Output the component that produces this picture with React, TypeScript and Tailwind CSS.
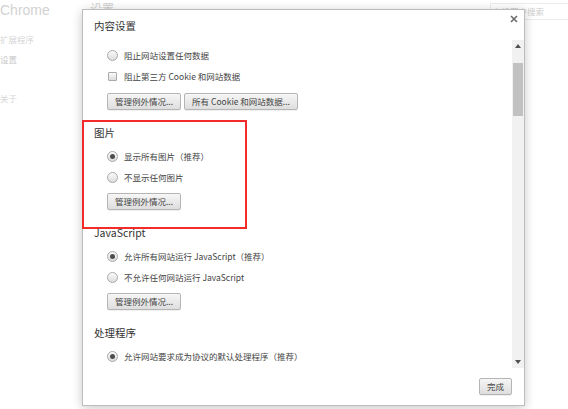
import React from "react";

const CJK = "font-['Noto_Sans_CJK_SC',sans-serif]";

function Radio({ checked }: { checked?: boolean }) {
  return (
    <span className="w-[11px] h-[11px] rounded-full border border-[#a9a9a9] bg-linear-to-b from-[#fbfbfb] to-[#dcdcdc] flex items-center justify-center shrink-0">
      {checked && <span className="w-[5px] h-[5px] rounded-full bg-[#4d4d4d]" />}
    </span>
  );
}

function Check() {
  return (
    <span className="w-[9px] h-[9px] ml-[1px] mr-[1px] rounded-[1px] border border-[#a9a9a9] bg-linear-to-b from-[#fbfbfb] to-[#dcdcdc] shrink-0" />
  );
}

function Option({
  kind = "radio",
  checked,
  children,
}: {
  kind?: "radio" | "check";
  checked?: boolean;
  children: React.ReactNode;
}) {
  return (
    <div className="h-[21px] flex items-center gap-[6px] pl-[24px] text-[8.5px] leading-none text-[#444]">
      {kind === "radio" ? <Radio checked={checked} /> : <Check />}
      <span>{children}</span>
    </div>
  );
}

function Btn({ children }: { children: React.ReactNode }) {
  return (
    <button className="h-[17px] px-[7px] rounded-[2px] border border-[#b5b5b5] bg-linear-to-b from-[#f6f6f6] to-[#dedede] text-[8.5px] leading-none text-[#444] shadow-[0_1px_0_rgba(0,0,0,0.06)]">
      {children}
    </button>
  );
}

function Section({
  title,
  children,
  buttons,
}: {
  title: string;
  children: React.ReactNode;
  buttons?: React.ReactNode;
}) {
  return (
    <div className="mt-[13px]">
      <div className="h-[20px] leading-[20px] pl-[11px] text-[10.5px] text-[#333]">{title}</div>
      <div className="mt-[3px]">{children}</div>
      {buttons && <div className="mt-[5px] pl-[24px] flex gap-[3px]">{buttons}</div>}
    </div>
  );
}

function Arrow({ up }: { up?: boolean }) {
  return (
    <svg width="6" height="4" viewBox="0 0 6 4" className="shrink-0">
      <path d={up ? "M0 4 L3 0 L6 4 Z" : "M0 0 L6 0 L3 4 Z"} fill="#505050" />
    </svg>
  );
}

export default function App() {
  return (
    <div className={`relative w-[568px] h-[409px] overflow-hidden bg-white ${CJK}`}>
      {/* page behind the dialog */}
      <div className="flex">
        <div className="w-[90px] shrink-0">
          <div className="h-[20px] leading-[20px] text-[14px] text-[#d2d2d2] font-['Liberation_Sans',sans-serif]">
            Chrome
          </div>
          <div className="mt-[9px] h-[20px] leading-[20px] text-[8.5px] text-[#d6d6d6]">扩展程序</div>
          <div className="h-[20px] leading-[20px] text-[8.5px] text-[#c9c9c9]">设置</div>
          <div className="mt-[19px] h-[20px] leading-[20px] text-[8.5px] text-[#d6d6d6]">关于</div>
        </div>
        <div className="flex-1 flex justify-between items-start">
          <div className="h-[18px] leading-[18px] text-[12px] text-[#cfcfcf]">设置</div>
          <div className="mt-[3px] -mr-[10px] w-[88px] h-[17px] border border-[#ececec] pl-[2px] text-[8.5px] leading-[15px] text-[#cdcdcd]">
            在设置中搜索
          </div>
        </div>
      </div>

      {/* dialog */}
      <div className="absolute left-[82px] top-[9px] w-[443px] h-[397px] flex flex-col bg-white border border-[#bdbdbd] shadow-[0_2px_10px_rgba(0,0,0,0.22)]">
        <div className="h-[30px] shrink-0 flex justify-between items-start">
          <div className="mt-[6px] pl-[11px] h-[20px] leading-[20px] text-[10.5px] text-[#333]">内容设置</div>
          <svg width="8" height="8" viewBox="0 0 8 8" className="mt-[5px] mr-[6px]">
            <path d="M1 1 L7 7 M7 1 L1 7" stroke="#6a6a6a" strokeWidth="1.6" />
          </svg>
        </div>

        <div className="h-[328px] shrink-0 flex">
          <div className="flex-1 overflow-hidden pt-[5px]">
            <Option>阻止网站设置任何数据</Option>
            <Option kind="check">阻止第三方 Cookie 和网站数据</Option>
            <div className="mt-[6px] pl-[24px] flex gap-[3px]">
              <Btn>管理例外情况...</Btn>
              <Btn>所有 Cookie 和网站数据...</Btn>
            </div>

            <Section title="图片" buttons={<Btn>管理例外情况...</Btn>}>
              <Option checked>显示所有图片（推荐）</Option>
              <Option>不显示任何图片</Option>
            </Section>

            <Section title="JavaScript" buttons={<Btn>管理例外情况...</Btn>}>
              <Option checked>允许所有网站运行 JavaScript（推荐）</Option>
              <Option>不允许任何网站运行 JavaScript</Option>
            </Section>

            <Section title="处理程序">
              <Option checked>允许网站要求成为协议的默认处理程序（推荐）</Option>
            </Section>
          </div>

          <div className="w-[12px] shrink-0 bg-[#f1f1f1] flex flex-col items-center">
            <div className="h-[12px] flex items-center">
              <Arrow up />
            </div>
            <div className="mt-[11px] w-[10px] h-[53px] bg-[#c1c1c1]" />
            <div className="flex-1" />
            <div className="h-[12px] flex items-center">
              <Arrow />
            </div>
          </div>
        </div>

        <div className="flex-1 flex justify-end items-start pt-[10px] pr-[12px]">
          <Btn>完成</Btn>
        </div>

        {/* red annotation frame */}
        <div className="absolute -left-[1px] top-[110px] w-[165px] h-[109px] border-2 border-[#f42b2b] pointer-events-none" />
      </div>
    </div>
  );
}
